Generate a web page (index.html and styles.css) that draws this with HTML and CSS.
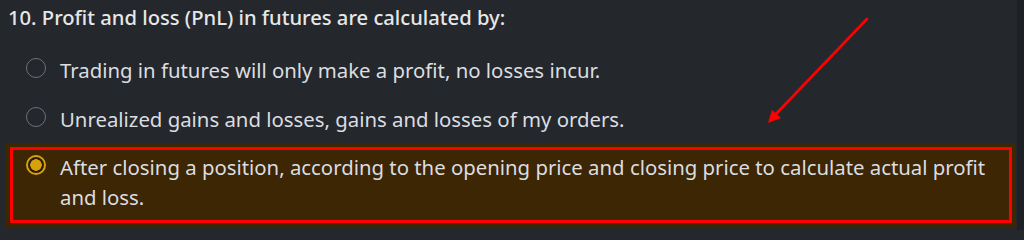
FILE: index.html
```html
<!DOCTYPE html>
<html lang="en">
<head>
<meta charset="utf-8">
<title>Quiz question</title>
<link rel="stylesheet" href="styles.css">
</head>
<body>
<div class="page">
  <main class="quiz">
    <h2 class="question">10. Profit and loss (PnL) in futures are calculated by:</h2>
    <ul class="options">
      <li class="option">
        <span class="radio"></span>
        <span class="label">Trading in futures will only make a profit, no losses incur.</span>
      </li>
      <li class="option">
        <span class="radio"></span>
        <span class="label">Unrealized gains and losses, gains and losses of my orders.</span>
      </li>
      <li class="option selected">
        <span class="radio"></span>
        <span class="label">After closing a position, according to the opening price and closing price to calculate actual profit and loss.</span>
      </li>
    </ul>
    <svg class="arrow" width="120" height="120" viewBox="0 0 120 120" aria-hidden="true">
      <line x1="107" y1="9" x2="14" y2="106" stroke="#ff0000" stroke-width="2.6" stroke-linecap="round"/>
      <polygon points="8,113 12,100 21,108" fill="#ff0000"/>
    </svg>
  </main>
  <div class="scrollbar"></div>
</div>
</body>
</html>
```

FILE: styles.css
```css
* { box-sizing: border-box; }
html, body {
  margin: 0;
  padding: 0;
  background: #24282d;
}
.page {
  display: flex;
  width: 1024px;
  height: 230px;
  overflow: hidden;
}
.quiz {
  position: relative;
  flex: 1;
  padding: 2px 1px 0 6px;
  font-family: "Noto Sans", "Open Sans", sans-serif;
}
.scrollbar {
  width: 7px;
  background: #1d2024;
}
.question {
  margin: 0 0 0 2px;
  font-size: 20.2px;
  line-height: 30px;
  font-weight: 500;
  color: #e6e7e9;
}
.options {
  list-style: none;
  margin: 23px 0 0 0;
  padding: 0;
  display: flex;
  flex-direction: column;
  gap: 19px;
}
.option {
  display: flex;
  align-items: flex-start;
  gap: 14px;
  padding: 0 0 0 20px;
  font-size: 20.35px;
  line-height: 30px;
  color: #dcdde0;
}
.radio {
  flex: none;
  width: 20px;
  height: 20px;
  margin-top: 3px;
  border-radius: 50%;
  border: 1.5px solid #6e7278;
}
.option.selected {
  margin-top: -10px;
  padding: 9px 24px 15px 20px;
  background: #3c2603;
  box-shadow: inset 0 0 0 4px #3c2603, inset 0 0 0 7px #ff0000;
}
.option.selected .radio {
  border: 2px solid #d6a10c;
  background: radial-gradient(circle, #d6a10c 0 5.5px, #2a1c04 6px 100%);
}
.arrow {
  position: absolute;
  left: 760px;
  top: 10px;
}
```
